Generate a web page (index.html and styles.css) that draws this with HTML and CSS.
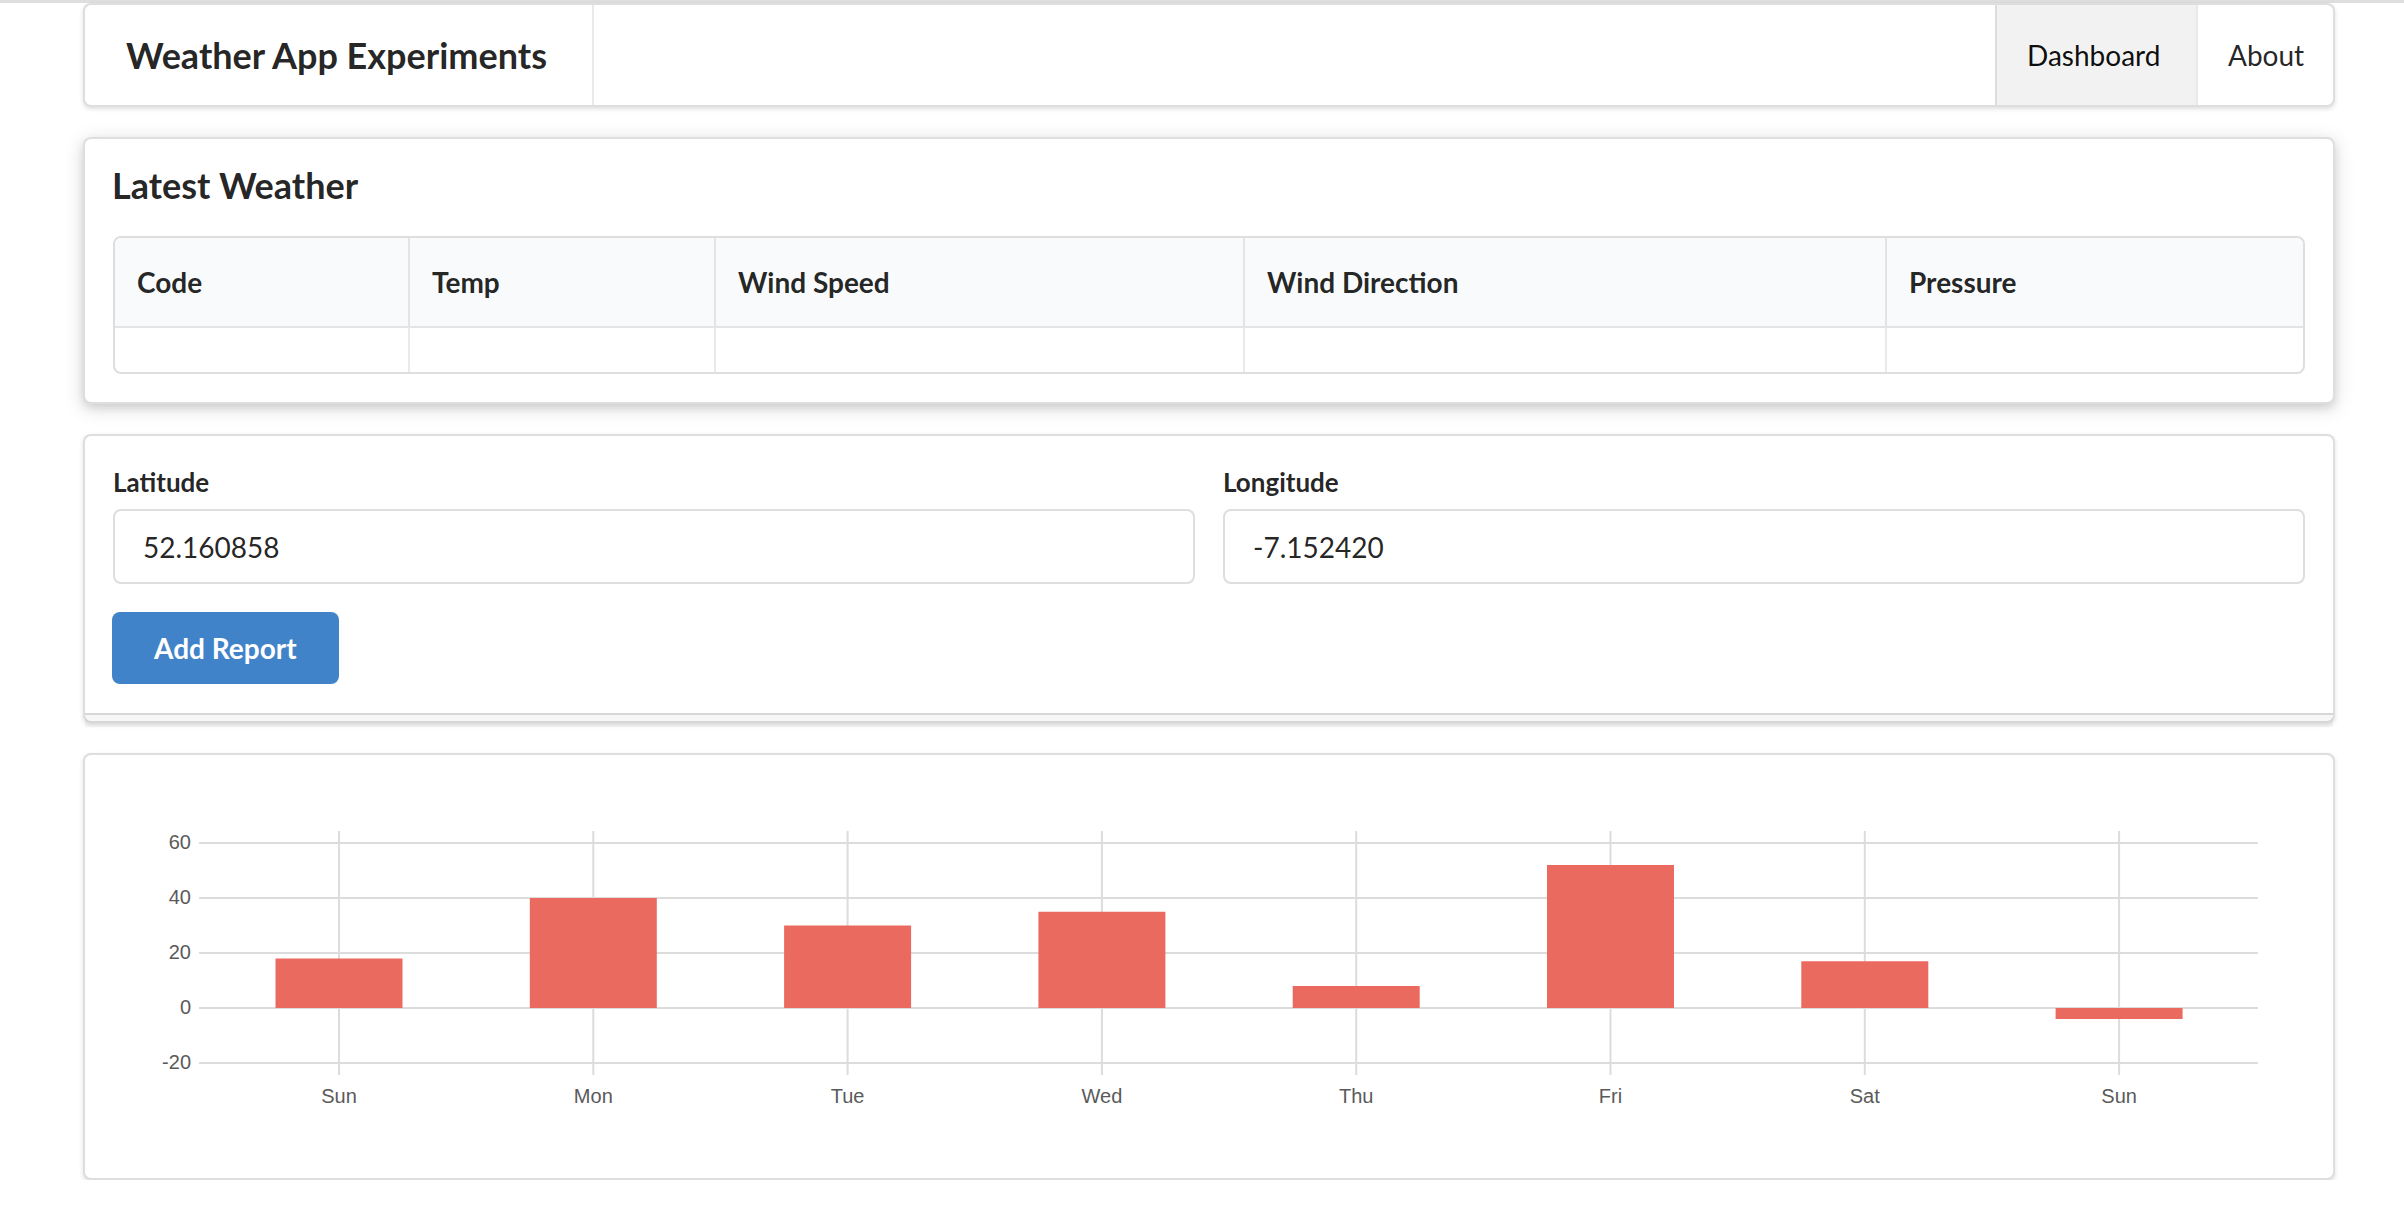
FILE: index.html
```html
<!DOCTYPE html>
<html>
<head>
<meta charset="utf-8">
<title>Weather App Experiments</title>
<link rel="stylesheet" href="styles.css">
</head>
<body>
<div class="topline"></div>
<div class="container">
  <nav class="menu">
    <div class="brand">Weather App Experiments</div>
    <div class="menu-right">
      <a class="item item-dash active">Dashboard</a>
      <a class="item item-about">About</a>
    </div>
  </nav>

  <section class="segment raised">
    <h3 class="title">Latest Weather</h3>
    <table class="wtable">
      <colgroup>
        <col class="c1"><col class="c2"><col class="c3"><col class="c4"><col class="c5">
      </colgroup>
      <thead>
        <tr><th>Code</th><th>Temp</th><th>Wind Speed</th><th>Wind Direction</th><th>Pressure</th></tr>
      </thead>
      <tbody>
        <tr><td></td><td></td><td></td><td></td><td></td></tr>
      </tbody>
    </table>
  </section>

  <section class="segment stacked">
    <form class="form">
      <div class="fields">
        <div class="field">
          <label>Latitude</label>
          <input type="text" value="52.160858">
        </div>
        <div class="field">
          <label>Longitude</label>
          <input type="text" value="-7.152420">
        </div>
      </div>
      <button type="button" class="btn">Add Report</button>
    </form>
  </section>

  <section class="segment chart-seg">
    <svg class="chart" width="2192" height="367" viewBox="113 784 2192 367">
      <g class="grid">
        <line x1="199" y1="844" x2="2258" y2="844"/>
        <line x1="199" y1="899" x2="2258" y2="899"/>
        <line x1="199" y1="954" x2="2258" y2="954"/>
        <line x1="199" y1="1009" x2="2258" y2="1009"/>
        <line x1="199" y1="1064" x2="2258" y2="1064"/>
        <line x1="339" y1="832" x2="339" y2="1076"/>
        <line x1="593.3" y1="832" x2="593.3" y2="1076"/>
        <line x1="847.6" y1="832" x2="847.6" y2="1076"/>
        <line x1="1101.9" y1="832" x2="1101.9" y2="1076"/>
        <line x1="1356.2" y1="832" x2="1356.2" y2="1076"/>
        <line x1="1610.5" y1="832" x2="1610.5" y2="1076"/>
        <line x1="1864.8" y1="832" x2="1864.8" y2="1076"/>
        <line x1="2119.1" y1="832" x2="2119.1" y2="1076"/>
      </g>
      <g class="bars">
        <rect x="275.5" y="959.5" width="127" height="49.5"/>
        <rect x="529.8" y="899" width="127" height="110"/>
        <rect x="784.1" y="926.5" width="127" height="82.5"/>
        <rect x="1038.4" y="912.75" width="127" height="96.25"/>
        <rect x="1292.7" y="987" width="127" height="22"/>
        <rect x="1547" y="866" width="127" height="143"/>
        <rect x="1801.3" y="962.25" width="127" height="46.75"/>
        <rect x="2055.6" y="1009" width="127" height="11"/>
      </g>
      <g class="ylab">
        <text x="191" y="850">60</text>
        <text x="191" y="905">40</text>
        <text x="191" y="960">20</text>
        <text x="191" y="1015">0</text>
        <text x="191" y="1070">-20</text>
      </g>
      <g class="xlab">
        <text x="339" y="1104">Sun</text>
        <text x="593.3" y="1104">Mon</text>
        <text x="847.6" y="1104">Tue</text>
        <text x="1101.9" y="1104">Wed</text>
        <text x="1356.2" y="1104">Thu</text>
        <text x="1610.5" y="1104">Fri</text>
        <text x="1864.8" y="1104">Sat</text>
        <text x="2119.1" y="1104">Sun</text>
      </g>
    </svg>
  </section>
</div>
</body>
</html>
```

FILE: styles.css
```css
* { box-sizing: border-box; }

html, body {
  margin: 0;
  padding: 0;
  background: #ffffff;
}

body {
  font-family: Lato, "Helvetica Neue", Arial, sans-serif;
  font-size: 28px;
  line-height: 1.4285em;
  color: rgba(0, 0, 0, 0.87);
}

.topline {
  height: 3px;
  background: #dedede;
}

.container {
  margin-left: 83px;
  width: 2252px;
}

/* ---------- menu ---------- */
.menu {
  display: flex;
  justify-content: space-between;
  height: 104px;
  background: #fff;
  border: 2px solid rgba(34, 36, 38, 0.15);
  border-radius: 8px;
  box-shadow: 0 2px 4px 0 rgba(34, 36, 38, 0.15);
  overflow: hidden;
}

.brand {
  display: flex;
  align-items: center;
  flex-shrink: 0;
  width: 509px;
  padding-left: 41px;
  font-size: 36px;
  font-weight: 700;
  line-height: 1;
  white-space: nowrap;
  border-right: 2px solid rgba(34, 36, 38, 0.1);
}

.menu-right {
  display: flex;
}

.item {
  display: flex;
  align-items: center;
  padding-left: 30px;
  font-size: 28px;
  line-height: 1;
  color: rgba(0, 0, 0, 0.87);
  border-left: 2px solid rgba(34, 36, 38, 0.1);
  white-space: nowrap;
}

.item-dash { width: 201px; }
.item-about { width: 137px; }

.item.active {
  background: rgba(0, 0, 0, 0.05);
  color: rgba(0, 0, 0, 0.95);
}

/* ---------- segments ---------- */
.segment {
  position: relative;
  margin-top: 30px;
  padding: 28px;
  background: #fff;
  border: 2px solid rgba(34, 36, 38, 0.15);
  border-radius: 8px;
  box-shadow: 0 2px 4px 0 rgba(34, 36, 38, 0.15);
}

.raised {
  box-shadow: 0 4px 8px 0 rgba(34, 36, 38, 0.12), 0 4px 20px 0 rgba(34, 36, 38, 0.15);
}

.stacked {
  padding-bottom: 37px;
}

.stacked::after {
  content: "";
  position: absolute;
  left: 0;
  bottom: -6px;
  width: 100%;
  height: 12px;
  border-top: 2px solid rgba(34, 36, 38, 0.15);
  background: rgba(0, 0, 0, 0.03);
}

.title {
  margin: -5px 0 28px -1px;
  font-size: 36px;
  font-weight: 700;
  line-height: 46px;
}

/* ---------- table ---------- */
.wtable {
  width: 100%;
  table-layout: fixed;
  border-collapse: separate;
  border-spacing: 0;
  border: 2px solid rgba(34, 36, 38, 0.15);
  border-radius: 8px;
}

.c1 { width: 293px; }
.c2 { width: 306px; }
.c3 { width: 529px; }
.c4 { width: 642px; }

.wtable th {
  padding: 26px 22px;
  text-align: left;
  font-size: 28px;
  font-weight: 700;
  line-height: 36px;
  background: #f9fafb;
  border-bottom: 2px solid rgba(34, 36, 38, 0.1);
  border-left: 2px solid rgba(34, 36, 38, 0.1);
  white-space: nowrap;
}

.wtable th:first-child {
  border-left: none;
  border-top-left-radius: 6px;
}

.wtable th:last-child {
  border-top-right-radius: 6px;
}

.wtable td {
  height: 44px;
  padding: 0;
  border-left: 2px solid rgba(34, 36, 38, 0.1);
}

.wtable td:first-child {
  border-left: none;
}

/* ---------- form ---------- */
.form {
  margin: 0;
}

.fields {
  display: grid;
  grid-template-columns: 1fr 1fr;
  column-gap: 28px;
  margin-bottom: 28px;
}

.field label {
  display: block;
  margin-bottom: 8px;
  font-size: 26px;
  font-weight: 700;
  line-height: 37px;
}

.field input {
  display: block;
  width: 100%;
  height: 75px;
  padding: 0 28px;
  font-family: Lato, "Helvetica Neue", Arial, sans-serif;
  font-size: 28px;
  color: rgba(0, 0, 0, 0.87);
  background: #fff;
  border: 2px solid rgba(34, 36, 38, 0.15);
  border-radius: 8px;
  outline: none;
}

.btn {
  display: block;
  height: 72px;
  margin-left: -1px;
  padding: 0 42px;
  font-family: Lato, "Helvetica Neue", Arial, sans-serif;
  font-size: 28px;
  font-weight: 700;
  line-height: 1;
  color: #fff;
  background: #4183c9;
  border: none;
  border-radius: 8px;
}

/* ---------- chart ---------- */
.chart {
  display: block;
}

.grid line {
  stroke: #dcdcdc;
  stroke-width: 2;
}

.bars rect {
  fill: #eb6a60;
}

.ylab text,
.xlab text {
  font-family: "Liberation Sans", Arial, sans-serif;
  font-size: 20px;
  fill: #5a5a5a;
}

.ylab text { text-anchor: end; }
.xlab text { text-anchor: middle; }
```
